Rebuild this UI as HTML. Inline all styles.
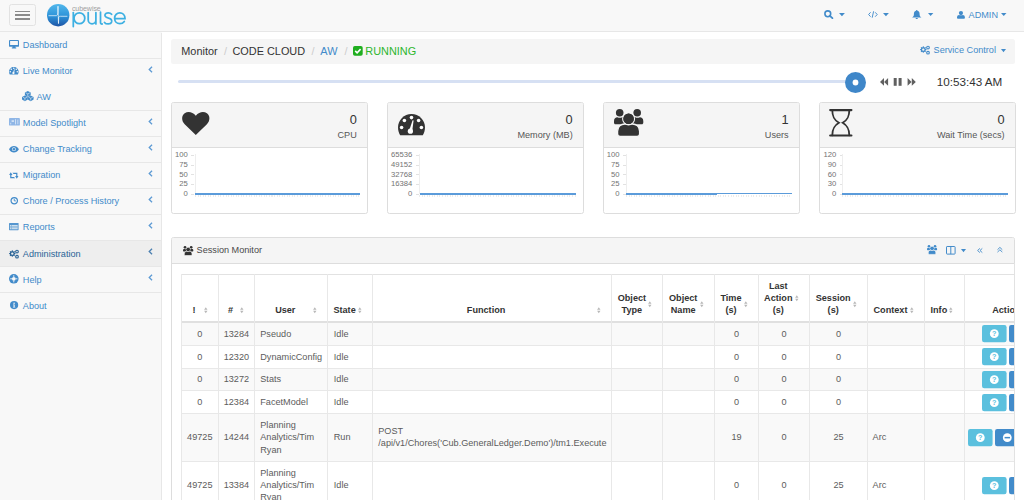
<!DOCTYPE html>
<html><head><meta charset="utf-8">
<style>
*{box-sizing:border-box;margin:0;padding:0}
html,body{width:1024px;height:500px;overflow:hidden;background:#f8f8f8;font-family:"Liberation Sans",sans-serif;color:#333}
.a{position:absolute}
svg{position:absolute;overflow:visible}
#hdr{position:absolute;left:0;top:0;width:1024px;height:32px;background:#f8f8f8;border-bottom:1px solid #e7e7e7}
#burger{position:absolute;left:8.6px;top:4.3px;width:27.8px;height:21.3px;border:1px solid #e2e2e2;border-radius:2.5px}
#burger i{position:absolute;left:5.6px;width:14.4px;height:1.5px;background:#8a8a8a}
#side{position:absolute;left:0;top:32.5px;width:162px;height:468px;border-right:1px solid #e7e7e7;background:#f8f8f8}
.ni{position:relative;height:26.07px;border-bottom:1px solid #e7e7e7;font-size:9.15px;color:#428bca}
.ni span.t{position:absolute;left:22.8px;top:7.5px;line-height:10px;white-space:nowrap}
.ni .chev{position:absolute;left:147.5px;top:6px;width:5px;height:7px}
.ni.act{background:#eee;color:#2a6496}
#main{position:absolute;left:162px;top:32px;width:862px;height:468px;background:#fff}
.hnav{color:#428bca;font-size:9.15px}
.crumb{position:absolute;left:171.2px;top:38.6px;width:843.8px;height:25.2px;background:#f5f5f5;border-radius:2.5px}
.crumb .t{position:absolute;top:6.5px;font-size:10.9px;line-height:12px;white-space:nowrap}
.sep{color:#ccc}
.panel{position:absolute;background:#fff;border:1px solid #ddd;border-radius:2.5px;overflow:hidden}
.ph{position:absolute;left:0;top:0;right:0;background:#f5f5f5;border-bottom:1px solid #ddd}
.big{position:absolute;right:10px;font-size:12.8px;line-height:14px;color:#333;text-align:right}
.lbl{position:absolute;right:10px;font-size:9.15px;line-height:10px;color:#333;text-align:right;white-space:nowrap}
.yl{position:absolute;font-size:7.4px;line-height:8px;color:#666;text-align:right;width:40px}
</style></head><body>
<!--HDR-->
<div id="hdr">
<div id="burger"><i style="top:5.3px"></i><i style="top:9.1px"></i><i style="top:13px"></i></div>
</div>
<svg style="left:46.6px;top:4px" width="22.4" height="22.4" viewBox="0 0 22.4 22.4"><defs><linearGradient id="lg" x1="0" y1="0" x2="0" y2="1"><stop offset="0" stop-color="#52b8ec"/><stop offset="0.55" stop-color="#2d92d8"/><stop offset="1" stop-color="#1e55a6"/></linearGradient></defs><circle cx="11.2" cy="11.2" r="11.2" fill="url(#lg)"/><path d="M1.5 11.7 H9.4 Q10.6 11.5 10.8 9 L11 2.2 L11.5 19.6 L11.7 13 Q11.9 12.3 13.4 12.3 H20.4" fill="none" stroke="#fff" stroke-width="0.8" opacity="0.85"/></svg>
<div class="a" style="left:71.9px;top:4.8px;font-size:7px;line-height:8px;color:#a0a0a0;letter-spacing:-0.05px">cubewise</div>
<svg style="left:0;top:0" width="1" height="1"><g fill="none" stroke="#3db0e2" stroke-width="1.75" stroke-linecap="round">
<path d="M73.3 12.6 V26.6"/><circle cx="79.4" cy="18.3" r="5.4"/>
<path d="M88.2 12.6 V19.9 A3.85 3.85 0 0 0 95.9 19.9 M95.9 12.6 V23.9"/>
<path d="M100.5 12.2 V22.2 Q100.5 24.1 102.2 24"/>
<path d="M111.6 14.2 C110.2 12.4 106.2 12.2 105.1 14.4 C104.2 16.6 106.6 17.6 108.6 18.2 C110.8 18.8 112.2 19.6 111.6 22 C110.8 24.6 106 24.4 104.5 22.4"/>
<path d="M114.7 18.6 H125 C125 15 122.6 12.9 119.8 12.9 C116.9 12.9 114.6 15.3 114.6 18.3 C114.6 21.4 116.9 23.7 119.8 23.7 C121.8 23.7 123.3 22.8 124.3 21.4"/>
</g></svg>
<svg style="left:824px;top:10.2px" width="9.1" height="8.6" viewBox="0 0 9.1 8.6"><circle cx="3.8" cy="3.8" r="2.9" fill="none" stroke="#428bca" stroke-width="1.6"/><path d="M5.9 5.9 L8.4 8.1" stroke="#428bca" stroke-width="1.9" stroke-linecap="round"/></svg>
<svg style="left:839.2px;top:12.9px" width="5.9" height="3.2" viewBox="0 0 5.9 3.2"><path d="M0 0 H5.9 L2.95 3.2 Z" fill="#428bca"/></svg>
<svg style="left:867.7px;top:11px" width="9.8" height="7" viewBox="0 0 9.8 7"><g fill="none" stroke="#428bca" stroke-width="0.95"><path d="M2.6 1.3 L0.6 3.5 L2.6 5.7 M7.2 1.3 L9.2 3.5 L7.2 5.7 M5.6 0.3 L4.2 6.7"/></g></svg>
<svg style="left:883.4px;top:12.9px" width="5.9" height="3.2" viewBox="0 0 5.9 3.2"><path d="M0 0 H5.9 L2.95 3.2 Z" fill="#428bca"/></svg>
<svg style="left:912.1px;top:9.9px" width="9.5" height="9.1" viewBox="0 0 9.5 9.1"><path d="M4.75 0 C5.3 0 5.5 0.4 5.5 0.8 C7.2 1.2 7.6 2.6 7.6 4.2 C7.6 6 8.3 6.8 9.5 7.6 H0 C1.2 6.8 1.9 6 1.9 4.2 C1.9 2.6 2.3 1.2 4 0.8 C4 0.4 4.2 0 4.75 0 Z M3.6 8 H5.9 C5.9 8.6 5.4 9.1 4.75 9.1 C4.1 9.1 3.6 8.6 3.6 8 Z" fill="#428bca"/></svg>
<svg style="left:927.6px;top:12.9px" width="5.3" height="3" viewBox="0 0 5.3 3"><path d="M0 0 H5.3 L2.65 3 Z" fill="#428bca"/></svg>
<svg style="left:956.9px;top:10.5px" width="7.9" height="7.8" viewBox="0 0 7.9 7.8"><circle cx="3.95" cy="2.1" r="2.1" fill="#428bca"/><path d="M0 6.6 C0 4.6 1 3.9 2 3.9 C2.6 4.3 5.3 4.3 5.9 3.9 C6.9 3.9 7.9 4.6 7.9 6.6 V7 C7.9 7.5 7.5 7.8 7 7.8 H0.9 C0.4 7.8 0 7.5 0 7 Z" fill="#428bca"/></svg>
<div class="a" style="left:968.6px;top:9.5px;font-size:9.15px;line-height:10px;color:#428bca;white-space:nowrap">ADMIN</div>
<svg style="left:1000.5px;top:12.9px" width="5.5" height="3" viewBox="0 0 5.5 3"><path d="M0 0 H5.5 L2.75 3 Z" fill="#428bca"/></svg>
<!--/HDR-->
<!--SIDE-->
<div id="side">
<div class="ni"><span class="t" style="left:22.8px">Dashboard</span></div>
<div class="ni" style="border-bottom-color:transparent"><span class="t" style="left:22.8px">Live Monitor</span><svg class="chev" style="left:148.1px;top:7.1px" width="3.7" height="5.1" viewBox="0 0 3.7 5.1"><path d="M3 0.5 L0.9 2.55 L3 4.6" fill="none" stroke="#5d9ad4" stroke-width="0.95"/></svg></div>
<div class="ni"><span class="t" style="left:36.5px">AW</span></div>
<div class="ni"><span class="t" style="left:22.8px">Model Spotlight</span><svg class="chev" style="left:148.1px;top:7.1px" width="3.7" height="5.1" viewBox="0 0 3.7 5.1"><path d="M3 0.5 L0.9 2.55 L3 4.6" fill="none" stroke="#5d9ad4" stroke-width="0.95"/></svg></div>
<div class="ni"><span class="t" style="left:22.8px">Change Tracking</span><svg class="chev" style="left:148.1px;top:7.1px" width="3.7" height="5.1" viewBox="0 0 3.7 5.1"><path d="M3 0.5 L0.9 2.55 L3 4.6" fill="none" stroke="#5d9ad4" stroke-width="0.95"/></svg></div>
<div class="ni"><span class="t" style="left:22.8px">Migration</span><svg class="chev" style="left:148.1px;top:7.1px" width="3.7" height="5.1" viewBox="0 0 3.7 5.1"><path d="M3 0.5 L0.9 2.55 L3 4.6" fill="none" stroke="#5d9ad4" stroke-width="0.95"/></svg></div>
<div class="ni"><span class="t" style="left:22.8px">Chore / Process History</span><svg class="chev" style="left:148.1px;top:7.1px" width="3.7" height="5.1" viewBox="0 0 3.7 5.1"><path d="M3 0.5 L0.9 2.55 L3 4.6" fill="none" stroke="#5d9ad4" stroke-width="0.95"/></svg></div>
<div class="ni"><span class="t" style="left:22.8px">Reports</span><svg class="chev" style="left:148.1px;top:7.1px" width="3.7" height="5.1" viewBox="0 0 3.7 5.1"><path d="M3 0.5 L0.9 2.55 L3 4.6" fill="none" stroke="#5d9ad4" stroke-width="0.95"/></svg></div>
<div class="ni act"><span class="t" style="left:22.8px">Administration</span><svg class="chev" style="left:148.1px;top:7.1px" width="3.7" height="5.1" viewBox="0 0 3.7 5.1"><path d="M3 0.5 L0.9 2.55 L3 4.6" fill="none" stroke="#4a7fb0" stroke-width="0.95"/></svg></div>
<div class="ni"><span class="t" style="left:22.8px">Help</span><svg class="chev" style="left:148.1px;top:7.1px" width="3.7" height="5.1" viewBox="0 0 3.7 5.1"><path d="M3 0.5 L0.9 2.55 L3 4.6" fill="none" stroke="#5d9ad4" stroke-width="0.95"/></svg></div>
<div class="ni"><span class="t" style="left:22.8px">About</span></div>
</div>
<svg style="left:9px;top:39.6px" width="10" height="8.4" viewBox="0 0 10 8.4"><path d="M0.9 0 H9.1 C9.6 0 10 0.4 10 0.9 V5.9 C10 6.4 9.6 6.8 9.1 6.8 H6.3 L6.6 7.6 H7.2 V8.4 H2.8 V7.6 H3.4 L3.7 6.8 H0.9 C0.4 6.8 0 6.4 0 5.9 V0.9 C0 0.4 0.4 0 0.9 0 Z M1.1 1.1 V4.9 H8.9 V1.1 Z" fill="#428bca" fill-rule="evenodd"/></svg>
<svg style="left:9.4px;top:66.8px" width="9.6" height="7.6" viewBox="0 0 27 21.3"><path d="M13.5 0 C6 0 0 6 0 13.5 C0 16.3 0.8 19 2.2 21.3 H24.8 C26.2 19 27 16.3 27 13.5 C27 6 21 0 13.5 0 Z" fill="#428bca"/><g fill="#f8f8f8"><circle cx="13.5" cy="3.6" r="2.2"/><circle cx="6.4" cy="6.5" r="2.2"/><circle cx="20.6" cy="6.5" r="2.2"/><circle cx="3.6" cy="13.5" r="2.2"/><circle cx="23.4" cy="13.5" r="2.2"/><circle cx="12.4" cy="17.2" r="3.2"/><path d="M10.8 16.6 L14.6 6.2 L16 6.6 L14.6 17.8 Z"/></g></svg>
<svg style="left:22.3px;top:90.6px" width="11.6" height="10.2" viewBox="0 0 11.6 10.2"><path d="M2.9 1.566 L5.8 0 L8.7 1.566 V4.234 L5.8 5.8 L2.9 4.234 Z" fill="#428bca"/><path d="M3.596 1.74 L5.8 2.9 L8.004 1.74 M5.8 2.9 V5.22" fill="none" stroke="#f8f8f8" stroke-width="0.55"/><path d="M0 5.966 L2.9 4.4 L5.8 5.966 V8.634 L2.9 10.2 L0 8.634 Z" fill="#428bca"/><path d="M0.696 6.140000000000001 L2.9 7.300000000000001 L5.104 6.140000000000001 M2.9 7.300000000000001 V9.620000000000001" fill="none" stroke="#f8f8f8" stroke-width="0.55"/><path d="M5.8 5.966 L8.7 4.4 L11.6 5.966 V8.634 L8.7 10.2 L5.8 8.634 Z" fill="#428bca"/><path d="M6.4959999999999996 6.140000000000001 L8.7 7.300000000000001 L10.904 6.140000000000001 M8.7 7.300000000000001 V9.620000000000001" fill="none" stroke="#f8f8f8" stroke-width="0.55"/></svg>
<svg style="left:9px;top:118.2px" width="10.9" height="7.6" viewBox="0 0 10.9 7.6"><rect x="0" y="0" width="10.9" height="7.6" rx="0.9" fill="#8fb6e6"/><g fill="#cfe0f4"><rect x="2.6" y="2.2" width="2.4" height="1.8"/><rect x="1.2" y="4.8" width="1" height="1.6"/><rect x="6" y="1.2" width="1" height="5.2"/><rect x="8.4" y="1.6" width="0.9" height="4.6"/></g></svg>
<svg style="left:9.3px;top:145.5px" width="9.9" height="6.4" viewBox="0 0 9.9 6.4"><path d="M0 3.2 C1.3 1 3 0 4.95 0 C6.9 0 8.6 1 9.9 3.2 C8.6 5.4 6.9 6.4 4.95 6.4 C3 6.4 1.3 5.4 0 3.2 Z" fill="#428bca"/><circle cx="4.95" cy="3.2" r="1.9" fill="#f8f8f8"/><circle cx="4.95" cy="3.2" r="1.3" fill="#428bca"/></svg>
<svg style="left:9.3px;top:171.6px" width="9.6" height="6.9" viewBox="0 0 9.6 6.9"><g fill="#428bca"><path d="M1.8 0.2 L0.1 2.9 H1.2 V6.2 H6.2 L5 5 H2.4 V2.9 H3.5 Z"/><path d="M7.8 6.7 L9.5 4 H8.4 V0.7 H3.4 L4.6 1.9 H7.2 V4 H6.1 Z"/></g></svg>
<svg style="left:9.9px;top:197.2px" width="8.5" height="7.5" viewBox="0 0 8.5 7.5"><circle cx="4.25" cy="3.75" r="3.2" fill="none" stroke="#428bca" stroke-width="1.2"/><path d="M4.25 1.8 V3.9 H5.9" fill="none" stroke="#428bca" stroke-width="0.9"/></svg>
<svg style="left:9.3px;top:222.8px" width="9.6" height="7.2" viewBox="0 0 9.6 7.2"><rect x="0" y="0" width="9.6" height="7.2" rx="0.6" fill="#428bca" opacity="0.9"/><g fill="#f8f8f8" opacity="0.75"><rect x="0.9" y="2" width="7.8" height="4.3"/></g><g fill="#428bca" opacity="0.6"><rect x="0.9" y="3" width="7.8" height="0.6"/><rect x="0.9" y="4.5" width="7.8" height="0.6"/><rect x="2.4" y="2" width="0.6" height="4.3"/></g></svg>
<svg style="left:9.3px;top:249.5px" width="10" height="9" viewBox="0 0 10 9"><path d="M2.72 1.17 L2.84 0.33 L3.76 0.33 L3.88 1.17 L4.61 1.47 L5.28 0.96 L5.94 1.62 L5.43 2.29 L5.73 3.02 L6.57 3.14 L6.57 4.06 L5.73 4.18 L5.43 4.91 L5.94 5.58 L5.28 6.24 L4.61 5.73 L3.88 6.03 L3.76 6.87 L2.84 6.87 L2.72 6.03 L1.99 5.73 L1.32 6.24 L0.66 5.58 L1.17 4.91 L0.87 4.18 L0.03 4.06 L0.03 3.14 L0.87 3.02 L1.17 2.29 L0.66 1.62 L1.32 0.96 L1.99 1.47 Z M4.50 3.60 A1.20 1.20 0 1 0 2.10 3.60 A1.20 1.20 0 1 0 4.50 3.60 Z" fill="#2a6496" fill-rule="evenodd"/><circle cx="8" cy="1.6" r="1.35" fill="none" stroke="#2a6496" stroke-width="1.1"/><circle cx="8" cy="6.7" r="1.35" fill="none" stroke="#2a6496" stroke-width="1.1"/></svg>
<svg style="left:9.4px;top:274.4px" width="9.6" height="9.6" viewBox="0 0 9.6 9.6"><circle cx="4.8" cy="4.8" r="4.8" fill="#428bca"/><circle cx="4.8" cy="4.8" r="1.9" fill="#f8f8f8"/><g stroke="#f8f8f8" stroke-width="1"><path d="M1.2 4.8 H3 M6.6 4.8 H8.4 M4.8 1.2 V3 M4.8 6.6 V8.4" opacity="0.9"/></g></svg>
<svg style="left:9.8px;top:301.4px" width="8.2" height="8.2" viewBox="0 0 8.2 8.2"><circle cx="4.1" cy="4.1" r="4.1" fill="#428bca"/><g fill="#f8f8f8"><circle cx="4.1" cy="2.2" r="0.8"/><path d="M3 3.4 H4.7 V5.9 H5.3 V6.6 H3 V5.9 H3.5 V4.1 H3 Z"/></g></svg>
<!--/SIDE-->
<div id="main"></div>
<!-- breadcrumb -->
<div class="crumb">
  <span class="t" style="left:10.1px">Monitor</span>
  <span class="t sep" style="left:52.8px">/</span>
  <span class="t" style="left:61.3px">CODE CLOUD</span>
  <span class="t sep" style="left:140.4px">/</span>
  <span class="t" style="left:149.1px;color:#428bca">AW</span>
  <span class="t sep" style="left:173.2px">/</span>
  <svg style="left:181.6px;top:7.6px" width="10" height="10" viewBox="0 0 10 10"><rect x="0" y="0" width="9.7" height="9.7" rx="1.8" fill="#1fae1f"/><path d="M2.2 4.9 L4.1 6.8 L7.6 3.1" stroke="#fff" stroke-width="1.6" fill="none"/></svg>
  <span class="t" style="left:194.1px;color:#2db52d">RUNNING</span>
  <svg style="left:748.8px;top:7.5px" width="10" height="9" viewBox="0 0 10 9"><path d="M2.72 1.17 L2.84 0.33 L3.76 0.33 L3.88 1.17 L4.61 1.47 L5.28 0.96 L5.94 1.62 L5.43 2.29 L5.73 3.02 L6.57 3.14 L6.57 4.06 L5.73 4.18 L5.43 4.91 L5.94 5.58 L5.28 6.24 L4.61 5.73 L3.88 6.03 L3.76 6.87 L2.84 6.87 L2.72 6.03 L1.99 5.73 L1.32 6.24 L0.66 5.58 L1.17 4.91 L0.87 4.18 L0.03 4.06 L0.03 3.14 L0.87 3.02 L1.17 2.29 L0.66 1.62 L1.32 0.96 L1.99 1.47 Z M4.50 3.60 A1.20 1.20 0 1 0 2.10 3.60 A1.20 1.20 0 1 0 4.50 3.60 Z" fill="#428bca" fill-rule="evenodd"/><circle cx="8" cy="1.6" r="1.35" fill="none" stroke="#428bca" stroke-width="1.1"/><circle cx="8" cy="6.7" r="1.35" fill="none" stroke="#428bca" stroke-width="1.1"/></svg>
  <span class="t hnav" style="left:762.4px;top:5.5px;font-size:9.15px">Service Control</span>
  <svg style="left:829.6px;top:10.2px" width="5" height="4" viewBox="0 0 5 4"><path d="M0 0 H5 L2.5 3.3 Z" fill="#428bca"/></svg>
</div>
<!-- slider -->
<div class="a" style="left:177.8px;top:80.1px;width:670px;height:2.9px;background:#d6e0f3;border-radius:1.5px"></div>
<svg style="left:844.8px;top:71.7px" width="21" height="21" viewBox="0 0 21 21"><circle cx="10.5" cy="10.5" r="10.5" fill="#3f87c9"/><circle cx="10.5" cy="10.5" r="2.9" fill="#fff"/></svg>
<svg style="left:880px;top:77.6px" width="37" height="8" viewBox="0 0 37 8"><g fill="#606060"><path d="M4 0 L0 3.9 L4 7.8 Z M8.1 0 L4.1 3.9 L8.1 7.8 Z"/><rect x="13.7" y="0" width="3" height="7.8"/><rect x="18.6" y="0" width="3" height="7.8"/><path d="M27.6 0 L31.6 3.9 L27.6 7.8 Z M31.8 0 L35.8 3.9 L31.8 7.8 Z"/></g></svg>
<div class="a" style="left:936.7px;top:75.2px;font-size:11.7px;line-height:13px;color:#333;white-space:nowrap">10:53:43 AM</div>

<!--PANELS-->
<div class="panel" style="left:171.1px;top:102.4px;width:196.7px;height:111.6px"><div class="ph" style="height:44.6px"></div></div>
<svg style="left:181.6px;top:111.7px" width="27.6" height="23.4" viewBox="0 0 28 24"><path d="M14 23.6 L2.6 12.6 C-0.9 9.2 -0.8 3.7 2.6 1.4 C5.8 -0.9 10.6 -0.2 14 3.9 C17.4 -0.2 22.2 -0.9 25.4 1.4 C28.8 3.7 28.9 9.2 25.4 12.6 Z" fill="#333"/></svg>
<div class="a" style="left:256.8px;width:100px;top:111.8px;font-size:12.8px;line-height:15px;text-align:right;color:#333">0</div>
<div class="a" style="left:236.8px;width:120px;top:129.9px;font-size:9.15px;line-height:10px;text-align:right;color:#555;white-space:nowrap">CPU</div>
<div class="a" style="left:147.9px;width:40px;top:151.1px;font-size:7.7px;line-height:8px;text-align:right;color:#737373">100</div>
<div class="a" style="left:191.2px;width:3px;top:154.9px;height:0.8px;background:#e2e2e2"></div>
<div class="a" style="left:147.9px;width:40px;top:160.8px;font-size:7.7px;line-height:8px;text-align:right;color:#737373">75</div>
<div class="a" style="left:191.2px;width:3px;top:164.6px;height:0.8px;background:#e2e2e2"></div>
<div class="a" style="left:147.9px;width:40px;top:170.5px;font-size:7.7px;line-height:8px;text-align:right;color:#737373">50</div>
<div class="a" style="left:191.2px;width:3px;top:174.3px;height:0.8px;background:#e2e2e2"></div>
<div class="a" style="left:147.9px;width:40px;top:180.2px;font-size:7.7px;line-height:8px;text-align:right;color:#737373">25</div>
<div class="a" style="left:191.2px;width:3px;top:184.0px;height:0.8px;background:#e2e2e2"></div>
<div class="a" style="left:147.9px;width:40px;top:189.9px;font-size:7.7px;line-height:8px;text-align:right;color:#737373">0</div>
<div class="a" style="left:191.2px;width:3px;top:193.7px;height:0.8px;background:#e2e2e2"></div>
<div class="a" style="left:194.6px;width:0.8px;top:153.8px;height:40.5px;background:#eee"></div>
<div class="a" style="left:194.5px;width:165.2px;top:195.2px;height:2.2px;background:repeating-linear-gradient(90deg,#ececec 0 1px,transparent 1px 2.55px)"></div>
<div class="a" style="left:195.0px;width:164.7px;top:193.1px;height:1.7px;background:#5b9bda"></div>
<div class="panel" style="left:387.0px;top:102.4px;width:196.7px;height:111.6px"><div class="ph" style="height:44.6px"></div></div>
<svg style="left:397.7px;top:113.8px" width="27" height="21.3" viewBox="0 0 27 21.3"><path d="M13.5 0 C6 0 0 6 0 13.5 C0 16.3 0.8 19 2.2 21.3 H24.8 C26.2 19 27 16.3 27 13.5 C27 6 21 0 13.5 0 Z" fill="#333"/><g fill="#fff"><circle cx="13.5" cy="3.6" r="1.8"/><circle cx="6.4" cy="6.5" r="1.8"/><circle cx="20.6" cy="6.5" r="1.8"/><circle cx="3.6" cy="13.5" r="1.8"/><circle cx="23.4" cy="13.5" r="1.8"/><circle cx="12.4" cy="17.2" r="2.6"/><path d="M11.2 16.6 L14.6 6.2 L15.6 6.5 L14.2 17.6 Z"/></g></svg>
<div class="a" style="left:472.7px;width:100px;top:111.8px;font-size:12.8px;line-height:15px;text-align:right;color:#333">0</div>
<div class="a" style="left:452.7px;width:120px;top:129.9px;font-size:9.15px;line-height:10px;text-align:right;color:#555;white-space:nowrap">Memory (MB)</div>
<div class="a" style="left:372.3px;width:40px;top:151.1px;font-size:7.7px;line-height:8px;text-align:right;color:#737373">65536</div>
<div class="a" style="left:415.6px;width:3px;top:154.9px;height:0.8px;background:#e2e2e2"></div>
<div class="a" style="left:372.3px;width:40px;top:160.8px;font-size:7.7px;line-height:8px;text-align:right;color:#737373">49152</div>
<div class="a" style="left:415.6px;width:3px;top:164.6px;height:0.8px;background:#e2e2e2"></div>
<div class="a" style="left:372.3px;width:40px;top:170.5px;font-size:7.7px;line-height:8px;text-align:right;color:#737373">32768</div>
<div class="a" style="left:415.6px;width:3px;top:174.3px;height:0.8px;background:#e2e2e2"></div>
<div class="a" style="left:372.3px;width:40px;top:180.2px;font-size:7.7px;line-height:8px;text-align:right;color:#737373">16384</div>
<div class="a" style="left:415.6px;width:3px;top:184.0px;height:0.8px;background:#e2e2e2"></div>
<div class="a" style="left:372.3px;width:40px;top:189.9px;font-size:7.7px;line-height:8px;text-align:right;color:#737373">0</div>
<div class="a" style="left:415.6px;width:3px;top:193.7px;height:0.8px;background:#e2e2e2"></div>
<div class="a" style="left:419.1px;width:0.8px;top:153.8px;height:40.5px;background:#eee"></div>
<div class="a" style="left:419.0px;width:156.5px;top:195.2px;height:2.2px;background:repeating-linear-gradient(90deg,#ececec 0 1px,transparent 1px 2.55px)"></div>
<div class="a" style="left:419.5px;width:156.0px;top:193.1px;height:1.7px;background:#5b9bda"></div>
<div class="panel" style="left:603.0px;top:102.4px;width:196.7px;height:111.6px"><div class="ph" style="height:44.6px"></div></div>
<svg style="left:613.5px;top:109.3px" width="29.4" height="27.3" viewBox="0 0 29.4 27.3"><g fill="#333"><circle cx="5.7" cy="3.8" r="3.8"/><circle cx="23.2" cy="3.8" r="3.8"/><path d="M0 12 C0 9.4 1.6 8.2 3.4 8.2 C4.8 9 6.8 9 8.2 8.2 C10 8.2 11.5 9.4 11.5 12 V13.8 C11.5 14.7 10.9 15.3 10 15.3 H1.5 C0.6 15.3 0 14.7 0 13.8 Z"/><path d="M17.7 12 C17.7 9.4 19.3 8.2 21.1 8.2 C22.5 9 24.5 9 25.9 8.2 C27.7 8.2 29.3 9.4 29.3 12 V13.8 C29.3 14.7 28.7 15.3 27.8 15.3 H19.2 C18.3 15.3 17.7 14.7 17.7 13.8 Z"/></g><g fill="#333" stroke="#f5f5f5" stroke-width="1.3"><circle cx="14.6" cy="9.8" r="5.9"/><path d="M3.6 22.3 C3.6 17.6 7 15 10.8 15 C12.6 16 16.6 16 18.4 15 C22.2 15 25.6 17.6 25.6 22.3 V24.9 C25.6 26.3 24.5 27.3 23.1 27.3 H6.1 C4.7 27.3 3.6 26.3 3.6 24.9 Z"/></g><circle cx="14.6" cy="9.8" r="5.25" fill="#333"/></svg>
<div class="a" style="left:688.7px;width:100px;top:111.8px;font-size:12.8px;line-height:15px;text-align:right;color:#333">1</div>
<div class="a" style="left:668.7px;width:120px;top:129.9px;font-size:9.15px;line-height:10px;text-align:right;color:#555;white-space:nowrap">Users</div>
<div class="a" style="left:579.5px;width:40px;top:151.1px;font-size:7.7px;line-height:8px;text-align:right;color:#737373">100</div>
<div class="a" style="left:622.8px;width:3px;top:154.9px;height:0.8px;background:#e2e2e2"></div>
<div class="a" style="left:579.5px;width:40px;top:160.8px;font-size:7.7px;line-height:8px;text-align:right;color:#737373">75</div>
<div class="a" style="left:622.8px;width:3px;top:164.6px;height:0.8px;background:#e2e2e2"></div>
<div class="a" style="left:579.5px;width:40px;top:170.5px;font-size:7.7px;line-height:8px;text-align:right;color:#737373">50</div>
<div class="a" style="left:622.8px;width:3px;top:174.3px;height:0.8px;background:#e2e2e2"></div>
<div class="a" style="left:579.5px;width:40px;top:180.2px;font-size:7.7px;line-height:8px;text-align:right;color:#737373">25</div>
<div class="a" style="left:622.8px;width:3px;top:184.0px;height:0.8px;background:#e2e2e2"></div>
<div class="a" style="left:579.5px;width:40px;top:189.9px;font-size:7.7px;line-height:8px;text-align:right;color:#737373">0</div>
<div class="a" style="left:622.8px;width:3px;top:193.7px;height:0.8px;background:#e2e2e2"></div>
<div class="a" style="left:625.6px;width:0.8px;top:153.8px;height:40.5px;background:#eee"></div>
<div class="a" style="left:625.5px;width:166.1px;top:195.2px;height:2.2px;background:repeating-linear-gradient(90deg,#ececec 0 1px,transparent 1px 2.55px)"></div>
<div class="a" style="left:626.0px;width:91.0px;top:193.1px;height:1.7px;background:#5b9bda"></div>
<div class="a" style="left:717px;width:74.6px;top:192.6px;height:1.7px;background:#5b9bda"></div>
<div class="panel" style="left:818.9px;top:102.4px;width:196.7px;height:111.6px"><div class="ph" style="height:44.6px"></div></div>
<svg style="left:829.1px;top:109.3px" width="24" height="27.3" viewBox="0 0 24 27.3"><g fill="none" stroke="#333" stroke-linecap="round"><path d="M1.2 1.1 H22.4 M1.2 26.5 H22.4" stroke-width="2.2"/><path d="M3.3 1.3 C3.3 7.2 4.6 10.6 9.9 13.8 C4.6 17 3.3 20.4 3.3 26.3 M20.3 1.3 C20.3 7.2 19 10.6 13.7 13.8 C19 17 20.3 20.4 20.3 26.3" stroke-width="1.85"/></g></svg>
<div class="a" style="left:904.6px;width:100px;top:111.8px;font-size:12.8px;line-height:15px;text-align:right;color:#333">0</div>
<div class="a" style="left:884.6px;width:120px;top:129.9px;font-size:9.15px;line-height:10px;text-align:right;color:#555;white-space:nowrap">Wait Time (secs)</div>
<div class="a" style="left:796.4px;width:40px;top:151.1px;font-size:7.7px;line-height:8px;text-align:right;color:#737373">120</div>
<div class="a" style="left:839.7px;width:3px;top:154.9px;height:0.8px;background:#e2e2e2"></div>
<div class="a" style="left:796.4px;width:40px;top:160.8px;font-size:7.7px;line-height:8px;text-align:right;color:#737373">90</div>
<div class="a" style="left:839.7px;width:3px;top:164.6px;height:0.8px;background:#e2e2e2"></div>
<div class="a" style="left:796.4px;width:40px;top:170.5px;font-size:7.7px;line-height:8px;text-align:right;color:#737373">60</div>
<div class="a" style="left:839.7px;width:3px;top:174.3px;height:0.8px;background:#e2e2e2"></div>
<div class="a" style="left:796.4px;width:40px;top:180.2px;font-size:7.7px;line-height:8px;text-align:right;color:#737373">30</div>
<div class="a" style="left:839.7px;width:3px;top:184.0px;height:0.8px;background:#e2e2e2"></div>
<div class="a" style="left:796.4px;width:40px;top:189.9px;font-size:7.7px;line-height:8px;text-align:right;color:#737373">0</div>
<div class="a" style="left:839.7px;width:3px;top:193.7px;height:0.8px;background:#e2e2e2"></div>
<div class="a" style="left:841.6px;width:0.8px;top:153.8px;height:40.5px;background:#eee"></div>
<div class="a" style="left:841.5px;width:166.3px;top:195.2px;height:2.2px;background:repeating-linear-gradient(90deg,#ececec 0 1px,transparent 1px 2.55px)"></div>
<div class="a" style="left:842.0px;width:165.8px;top:193.1px;height:1.7px;background:#5b9bda"></div>
<!--/PANELS-->
<!--TABLE-->
<div class="panel" style="left:171.1px;top:237.2px;width:844.3px;height:300px;border-radius:2.5px"><div class="ph" style="height:25.9px"></div></div>
<svg style="left:182.6px;top:245.6px" width="10.4" height="9.6" viewBox="0 0 29.4 27.3"><g fill="#333"><circle cx="5.7" cy="3.8" r="3.8"/><circle cx="23.2" cy="3.8" r="3.8"/><path d="M0 12 C0 9.4 1.6 8.2 3.4 8.2 C4.8 9 6.8 9 8.2 8.2 C10 8.2 11.5 9.4 11.5 12 V13.8 C11.5 14.7 10.9 15.3 10 15.3 H1.5 C0.6 15.3 0 14.7 0 13.8 Z"/><path d="M17.7 12 C17.7 9.4 19.3 8.2 21.1 8.2 C22.5 9 24.5 9 25.9 8.2 C27.7 8.2 29.3 9.4 29.3 12 V13.8 C29.3 14.7 28.7 15.3 27.8 15.3 H19.2 C18.3 15.3 17.7 14.7 17.7 13.8 Z"/></g><g fill="#333" stroke="#f5f5f5" stroke-width="2"><circle cx="14.6" cy="9.8" r="5.9"/><path d="M3.6 22.3 C3.6 17.6 7 15 10.8 15 C12.6 16 16.6 16 18.4 15 C22.2 15 25.6 17.6 25.6 22.3 V24.9 C25.6 26.3 24.5 27.3 23.1 27.3 H6.1 C4.7 27.3 3.6 26.3 3.6 24.9 Z"/></g><circle cx="14.6" cy="9.8" r="4.9" fill="#333"/></svg>
<div class="a" style="left:196.6px;top:245.1px;font-size:9.15px;line-height:10px;color:#4a4a4a;white-space:nowrap">Session Monitor</div>
<svg style="left:927.1px;top:245.4px" width="10.2" height="9.4" viewBox="0 0 29.4 27.3"><g fill="#428bca"><circle cx="5.7" cy="3.8" r="3.8"/><circle cx="23.2" cy="3.8" r="3.8"/><path d="M0 12 C0 9.4 1.6 8.2 3.4 8.2 C4.8 9 6.8 9 8.2 8.2 C10 8.2 11.5 9.4 11.5 12 V13.8 C11.5 14.7 10.9 15.3 10 15.3 H1.5 C0.6 15.3 0 14.7 0 13.8 Z"/><path d="M17.7 12 C17.7 9.4 19.3 8.2 21.1 8.2 C22.5 9 24.5 9 25.9 8.2 C27.7 8.2 29.3 9.4 29.3 12 V13.8 C29.3 14.7 28.7 15.3 27.8 15.3 H19.2 C18.3 15.3 17.7 14.7 17.7 13.8 Z"/></g><g fill="#428bca" stroke="#f5f5f5" stroke-width="2"><circle cx="14.6" cy="9.8" r="5.9"/><path d="M3.6 22.3 C3.6 17.6 7 15 10.8 15 C12.6 16 16.6 16 18.4 15 C22.2 15 25.6 17.6 25.6 22.3 V24.9 C25.6 26.3 24.5 27.3 23.1 27.3 H6.1 C4.7 27.3 3.6 26.3 3.6 24.9 Z"/></g><circle cx="14.6" cy="9.8" r="4.9" fill="#428bca"/></svg>
<svg style="left:945.9px;top:245.8px" width="9.6" height="8.6" viewBox="0 0 9.6 8.6"><g fill="none" stroke="#428bca" stroke-width="1.0"><rect x="0.5" y="0.5" width="8.6" height="7.6" rx="0.6"/><path d="M4.8 0.5 V8.1"/></g></svg>
<svg style="left:961.4px;top:248.8px" width="5" height="3.4" viewBox="0 0 5 3.4"><path d="M0 0 H5 L2.5 3.2 Z" fill="#428bca"/></svg>
<svg style="left:977.1px;top:247.6px" width="5.8" height="5" viewBox="0 0 5.8 5"><path d="M2.9 0.4 L0.6 2.5 L2.9 4.6 M5.3 0.4 L3 2.5 L5.3 4.6" fill="none" stroke="#428bca" stroke-width="0.9"/></svg>
<svg style="left:996.5px;top:247.2px" width="5.8" height="5.4" viewBox="0 0 5.8 5.4"><path d="M0.5 2.7 L2.9 0.4 L5.3 2.7 M0.5 5.1 L2.9 2.8 L5.3 5.1" fill="none" stroke="#428bca" stroke-width="0.9"/></svg>
<div class="a" style="left:172.6px;top:264px;width:842.0px;height:236px;overflow:hidden">
<div class="a" style="left:8.9px;top:58.4px;width:896.5px;height:23.0px;background:#f9f9f9"></div>
<div class="a" style="left:8.9px;top:104.0px;width:896.5px;height:22.7px;background:#f9f9f9"></div>
<div class="a" style="left:8.9px;top:149.4px;width:896.5px;height:47.8px;background:#f9f9f9"></div>
<div class="a" style="left:8.9px;top:9.8px;width:896.5px;height:1px;background:#e2e2e2"></div>
<div class="a" style="left:8.9px;top:57.1px;width:896.5px;height:1.6px;background:#e0e0e0"></div>
<div class="a" style="left:8.9px;top:80.9px;width:896.5px;height:1px;background:#e8e8e8"></div>
<div class="a" style="left:8.9px;top:103.5px;width:896.5px;height:1px;background:#e8e8e8"></div>
<div class="a" style="left:8.9px;top:126.2px;width:896.5px;height:1px;background:#e8e8e8"></div>
<div class="a" style="left:8.9px;top:148.9px;width:896.5px;height:1px;background:#e8e8e8"></div>
<div class="a" style="left:8.9px;top:196.7px;width:896.5px;height:1px;background:#e8e8e8"></div>
<div class="a" style="left:8.9px;top:244.3px;width:896.5px;height:1px;background:#e8e8e8"></div>
<div class="a" style="left:8.4px;top:9.8px;width:1px;height:260px;background:#e8e8e8"></div>
<div class="a" style="left:45.1px;top:9.8px;width:1px;height:260px;background:#e8e8e8"></div>
<div class="a" style="left:81.4px;top:9.8px;width:1px;height:260px;background:#e8e8e8"></div>
<div class="a" style="left:154.5px;top:9.8px;width:1px;height:260px;background:#e8e8e8"></div>
<div class="a" style="left:199.2px;top:9.8px;width:1px;height:260px;background:#e8e8e8"></div>
<div class="a" style="left:438.4px;top:9.8px;width:1px;height:260px;background:#e8e8e8"></div>
<div class="a" style="left:489.6px;top:9.8px;width:1px;height:260px;background:#e8e8e8"></div>
<div class="a" style="left:541.3px;top:9.8px;width:1px;height:260px;background:#e8e8e8"></div>
<div class="a" style="left:585.4px;top:9.8px;width:1px;height:260px;background:#e8e8e8"></div>
<div class="a" style="left:636.3px;top:9.8px;width:1px;height:260px;background:#e8e8e8"></div>
<div class="a" style="left:694.6px;top:9.8px;width:1px;height:260px;background:#e8e8e8"></div>
<div class="a" style="left:751.6px;top:9.8px;width:1px;height:260px;background:#e8e8e8"></div>
<div class="a" style="left:791.0px;top:9.8px;width:1px;height:260px;background:#e8e8e8"></div>
<div class="a" style="left:904.9px;top:9.8px;width:1px;height:260px;background:#e8e8e8"></div>
<div class="a" style="left:-18.5px;width:80px;top:40.3px;font-size:9.15px;line-height:12px;font-weight:bold;text-align:center;color:#333;white-space:nowrap">!</div>
<svg style="left:31.0px;top:43.2px" width="3.6" height="6.4" viewBox="0 0 3.6 6.4"><path d="M0.1 2.7 L1.8 0.2 L3.5 2.7 Z M0.1 3.7 L1.8 6.2 L3.5 3.7 Z" fill="#b8b8b8"/></svg>
<div class="a" style="left:18.0px;width:80px;top:40.3px;font-size:9.15px;line-height:12px;font-weight:bold;text-align:center;color:#333;white-space:nowrap">#</div>
<svg style="left:67.3px;top:43.2px" width="3.6" height="6.4" viewBox="0 0 3.6 6.4"><path d="M0.1 2.7 L1.8 0.2 L3.5 2.7 Z M0.1 3.7 L1.8 6.2 L3.5 3.7 Z" fill="#b8b8b8"/></svg>
<div class="a" style="left:72.7px;width:80px;top:40.3px;font-size:9.15px;line-height:12px;font-weight:bold;text-align:center;color:#333;white-space:nowrap">User</div>
<svg style="left:140.4px;top:43.2px" width="3.6" height="6.4" viewBox="0 0 3.6 6.4"><path d="M0.1 2.7 L1.8 0.2 L3.5 2.7 Z M0.1 3.7 L1.8 6.2 L3.5 3.7 Z" fill="#b8b8b8"/></svg>
<div class="a" style="left:132.0px;width:80px;top:40.3px;font-size:9.15px;line-height:12px;font-weight:bold;text-align:center;color:#333;white-space:nowrap">State</div>
<svg style="left:185.1px;top:43.2px" width="3.6" height="6.4" viewBox="0 0 3.6 6.4"><path d="M0.1 2.7 L1.8 0.2 L3.5 2.7 Z M0.1 3.7 L1.8 6.2 L3.5 3.7 Z" fill="#b8b8b8"/></svg>
<div class="a" style="left:273.5px;width:80px;top:40.3px;font-size:9.15px;line-height:12px;font-weight:bold;text-align:center;color:#333;white-space:nowrap">Function</div>
<svg style="left:424.3px;top:43.2px" width="3.6" height="6.4" viewBox="0 0 3.6 6.4"><path d="M0.1 2.7 L1.8 0.2 L3.5 2.7 Z M0.1 3.7 L1.8 6.2 L3.5 3.7 Z" fill="#b8b8b8"/></svg>
<div class="a" style="left:419.3px;width:80px;top:27.9px;font-size:9.15px;line-height:12px;font-weight:bold;text-align:center;color:#333;white-space:nowrap">Object</div>
<div class="a" style="left:419.3px;width:80px;top:40.3px;font-size:9.15px;line-height:12px;font-weight:bold;text-align:center;color:#333;white-space:nowrap">Type</div>
<svg style="left:475.5px;top:37.2px" width="3.6" height="6.4" viewBox="0 0 3.6 6.4"><path d="M0.1 2.7 L1.8 0.2 L3.5 2.7 Z M0.1 3.7 L1.8 6.2 L3.5 3.7 Z" fill="#b8b8b8"/></svg>
<div class="a" style="left:470.6px;width:80px;top:27.9px;font-size:9.15px;line-height:12px;font-weight:bold;text-align:center;color:#333;white-space:nowrap">Object</div>
<div class="a" style="left:470.6px;width:80px;top:40.3px;font-size:9.15px;line-height:12px;font-weight:bold;text-align:center;color:#333;white-space:nowrap">Name</div>
<svg style="left:527.2px;top:37.2px" width="3.6" height="6.4" viewBox="0 0 3.6 6.4"><path d="M0.1 2.7 L1.8 0.2 L3.5 2.7 Z M0.1 3.7 L1.8 6.2 L3.5 3.7 Z" fill="#b8b8b8"/></svg>
<div class="a" style="left:518.4px;width:80px;top:27.9px;font-size:9.15px;line-height:12px;font-weight:bold;text-align:center;color:#333;white-space:nowrap">Time</div>
<div class="a" style="left:518.4px;width:80px;top:40.3px;font-size:9.15px;line-height:12px;font-weight:bold;text-align:center;color:#333;white-space:nowrap">(s)</div>
<svg style="left:571.3px;top:37.2px" width="3.6" height="6.4" viewBox="0 0 3.6 6.4"><path d="M0.1 2.7 L1.8 0.2 L3.5 2.7 Z M0.1 3.7 L1.8 6.2 L3.5 3.7 Z" fill="#b8b8b8"/></svg>
<div class="a" style="left:565.7px;width:80px;top:15.5px;font-size:9.15px;line-height:12px;font-weight:bold;text-align:center;color:#333;white-space:nowrap">Last</div>
<div class="a" style="left:565.7px;width:80px;top:27.9px;font-size:9.15px;line-height:12px;font-weight:bold;text-align:center;color:#333;white-space:nowrap">Action</div>
<div class="a" style="left:565.7px;width:80px;top:40.3px;font-size:9.15px;line-height:12px;font-weight:bold;text-align:center;color:#333;white-space:nowrap">(s)</div>
<svg style="left:622.2px;top:31.0px" width="3.6" height="6.4" viewBox="0 0 3.6 6.4"><path d="M0.1 2.7 L1.8 0.2 L3.5 2.7 Z M0.1 3.7 L1.8 6.2 L3.5 3.7 Z" fill="#b8b8b8"/></svg>
<div class="a" style="left:620.6px;width:80px;top:27.9px;font-size:9.15px;line-height:12px;font-weight:bold;text-align:center;color:#333;white-space:nowrap">Session</div>
<div class="a" style="left:620.6px;width:80px;top:40.3px;font-size:9.15px;line-height:12px;font-weight:bold;text-align:center;color:#333;white-space:nowrap">(s)</div>
<svg style="left:680.5px;top:37.2px" width="3.6" height="6.4" viewBox="0 0 3.6 6.4"><path d="M0.1 2.7 L1.8 0.2 L3.5 2.7 Z M0.1 3.7 L1.8 6.2 L3.5 3.7 Z" fill="#b8b8b8"/></svg>
<div class="a" style="left:677.9px;width:80px;top:40.3px;font-size:9.15px;line-height:12px;font-weight:bold;text-align:center;color:#333;white-space:nowrap">Context</div>
<svg style="left:737.5px;top:43.2px" width="3.6" height="6.4" viewBox="0 0 3.6 6.4"><path d="M0.1 2.7 L1.8 0.2 L3.5 2.7 Z M0.1 3.7 L1.8 6.2 L3.5 3.7 Z" fill="#b8b8b8"/></svg>
<div class="a" style="left:726.3px;width:80px;top:40.3px;font-size:9.15px;line-height:12px;font-weight:bold;text-align:center;color:#333;white-space:nowrap">Info</div>
<svg style="left:776.9px;top:43.2px" width="3.6" height="6.4" viewBox="0 0 3.6 6.4"><path d="M0.1 2.7 L1.8 0.2 L3.5 2.7 Z M0.1 3.7 L1.8 6.2 L3.5 3.7 Z" fill="#b8b8b8"/></svg>
<div class="a" style="left:819.6px;top:40.3px;font-size:9.15px;line-height:12px;font-weight:bold;color:#333;white-space:nowrap">Actions</div>
<div class="a" style="left:-32.8px;width:120px;top:63.8px;font-size:9.15px;line-height:12.4px;text-align:center;color:#5c5c5c;white-space:nowrap">0</div>
<div class="a" style="left:3.8px;width:120px;top:63.8px;font-size:9.15px;line-height:12.4px;text-align:center;color:#5c5c5c;white-space:nowrap">13284</div>
<div class="a" style="left:87.7px;top:63.8px;font-size:9.15px;line-height:12.4px;color:#5c5c5c;white-space:nowrap">Pseudo</div>
<div class="a" style="left:161.2px;top:63.8px;font-size:9.15px;line-height:12.4px;color:#5c5c5c;white-space:nowrap">Idle</div>
<div class="a" style="left:503.9px;width:120px;top:63.8px;font-size:9.15px;line-height:12.4px;text-align:center;color:#5c5c5c;white-space:nowrap">0</div>
<div class="a" style="left:551.4px;width:120px;top:63.8px;font-size:9.15px;line-height:12.4px;text-align:center;color:#5c5c5c;white-space:nowrap">0</div>
<div class="a" style="left:605.9px;width:120px;top:63.8px;font-size:9.15px;line-height:12.4px;text-align:center;color:#5c5c5c;white-space:nowrap">0</div>
<svg style="left:809.5px;top:61.4px" width="24.6" height="17.3" viewBox="0 0 24.6 17.3"><rect width="24.6" height="17.3" rx="2.2" fill="#5bc0de"/><circle cx="12.3" cy="8.65" r="4.4" fill="#fff"/><text x="12.3" y="11.3" font-size="7.2" font-weight="bold" text-anchor="middle" fill="#5bc0de" font-family="Liberation Sans">?</text></svg>
<svg style="left:836.7px;top:61.4px" width="24.6" height="17.3" viewBox="0 0 24.6 17.3"><rect width="24.6" height="17.3" rx="2.2" fill="#428bca"/><circle cx="12.3" cy="8.65" r="4.4" fill="#fff"/><rect x="9.6" y="7.9" width="5.4" height="1.5" fill="#428bca"/></svg>
<div class="a" style="left:-32.8px;width:120px;top:86.6px;font-size:9.15px;line-height:12.4px;text-align:center;color:#5c5c5c;white-space:nowrap">0</div>
<div class="a" style="left:3.8px;width:120px;top:86.6px;font-size:9.15px;line-height:12.4px;text-align:center;color:#5c5c5c;white-space:nowrap">12320</div>
<div class="a" style="left:87.7px;top:86.6px;font-size:9.15px;line-height:12.4px;color:#5c5c5c;white-space:nowrap">DynamicConfig</div>
<div class="a" style="left:161.2px;top:86.6px;font-size:9.15px;line-height:12.4px;color:#5c5c5c;white-space:nowrap">Idle</div>
<div class="a" style="left:503.9px;width:120px;top:86.6px;font-size:9.15px;line-height:12.4px;text-align:center;color:#5c5c5c;white-space:nowrap">0</div>
<div class="a" style="left:551.4px;width:120px;top:86.6px;font-size:9.15px;line-height:12.4px;text-align:center;color:#5c5c5c;white-space:nowrap">0</div>
<div class="a" style="left:605.9px;width:120px;top:86.6px;font-size:9.15px;line-height:12.4px;text-align:center;color:#5c5c5c;white-space:nowrap">0</div>
<svg style="left:809.5px;top:84.2px" width="24.6" height="17.3" viewBox="0 0 24.6 17.3"><rect width="24.6" height="17.3" rx="2.2" fill="#5bc0de"/><circle cx="12.3" cy="8.65" r="4.4" fill="#fff"/><text x="12.3" y="11.3" font-size="7.2" font-weight="bold" text-anchor="middle" fill="#5bc0de" font-family="Liberation Sans">?</text></svg>
<svg style="left:836.7px;top:84.2px" width="24.6" height="17.3" viewBox="0 0 24.6 17.3"><rect width="24.6" height="17.3" rx="2.2" fill="#428bca"/><circle cx="12.3" cy="8.65" r="4.4" fill="#fff"/><rect x="9.6" y="7.9" width="5.4" height="1.5" fill="#428bca"/></svg>
<div class="a" style="left:-32.8px;width:120px;top:109.3px;font-size:9.15px;line-height:12.4px;text-align:center;color:#5c5c5c;white-space:nowrap">0</div>
<div class="a" style="left:3.8px;width:120px;top:109.3px;font-size:9.15px;line-height:12.4px;text-align:center;color:#5c5c5c;white-space:nowrap">13272</div>
<div class="a" style="left:87.7px;top:109.3px;font-size:9.15px;line-height:12.4px;color:#5c5c5c;white-space:nowrap">Stats</div>
<div class="a" style="left:161.2px;top:109.3px;font-size:9.15px;line-height:12.4px;color:#5c5c5c;white-space:nowrap">Idle</div>
<div class="a" style="left:503.9px;width:120px;top:109.3px;font-size:9.15px;line-height:12.4px;text-align:center;color:#5c5c5c;white-space:nowrap">0</div>
<div class="a" style="left:551.4px;width:120px;top:109.3px;font-size:9.15px;line-height:12.4px;text-align:center;color:#5c5c5c;white-space:nowrap">0</div>
<div class="a" style="left:605.9px;width:120px;top:109.3px;font-size:9.15px;line-height:12.4px;text-align:center;color:#5c5c5c;white-space:nowrap">0</div>
<svg style="left:809.5px;top:106.8px" width="24.6" height="17.3" viewBox="0 0 24.6 17.3"><rect width="24.6" height="17.3" rx="2.2" fill="#5bc0de"/><circle cx="12.3" cy="8.65" r="4.4" fill="#fff"/><text x="12.3" y="11.3" font-size="7.2" font-weight="bold" text-anchor="middle" fill="#5bc0de" font-family="Liberation Sans">?</text></svg>
<svg style="left:836.7px;top:106.8px" width="24.6" height="17.3" viewBox="0 0 24.6 17.3"><rect width="24.6" height="17.3" rx="2.2" fill="#428bca"/><circle cx="12.3" cy="8.65" r="4.4" fill="#fff"/><rect x="9.6" y="7.9" width="5.4" height="1.5" fill="#428bca"/></svg>
<div class="a" style="left:-32.8px;width:120px;top:131.9px;font-size:9.15px;line-height:12.4px;text-align:center;color:#5c5c5c;white-space:nowrap">0</div>
<div class="a" style="left:3.8px;width:120px;top:131.9px;font-size:9.15px;line-height:12.4px;text-align:center;color:#5c5c5c;white-space:nowrap">12384</div>
<div class="a" style="left:87.7px;top:131.9px;font-size:9.15px;line-height:12.4px;color:#5c5c5c;white-space:nowrap">FacetModel</div>
<div class="a" style="left:161.2px;top:131.9px;font-size:9.15px;line-height:12.4px;color:#5c5c5c;white-space:nowrap">Idle</div>
<div class="a" style="left:503.9px;width:120px;top:131.9px;font-size:9.15px;line-height:12.4px;text-align:center;color:#5c5c5c;white-space:nowrap">0</div>
<div class="a" style="left:551.4px;width:120px;top:131.9px;font-size:9.15px;line-height:12.4px;text-align:center;color:#5c5c5c;white-space:nowrap">0</div>
<div class="a" style="left:605.9px;width:120px;top:131.9px;font-size:9.15px;line-height:12.4px;text-align:center;color:#5c5c5c;white-space:nowrap">0</div>
<svg style="left:809.5px;top:129.5px" width="24.6" height="17.3" viewBox="0 0 24.6 17.3"><rect width="24.6" height="17.3" rx="2.2" fill="#5bc0de"/><circle cx="12.3" cy="8.65" r="4.4" fill="#fff"/><text x="12.3" y="11.3" font-size="7.2" font-weight="bold" text-anchor="middle" fill="#5bc0de" font-family="Liberation Sans">?</text></svg>
<svg style="left:836.7px;top:129.5px" width="24.6" height="17.3" viewBox="0 0 24.6 17.3"><rect width="24.6" height="17.3" rx="2.2" fill="#428bca"/><circle cx="12.3" cy="8.65" r="4.4" fill="#fff"/><rect x="9.6" y="7.9" width="5.4" height="1.5" fill="#428bca"/></svg>
<div class="a" style="left:-32.8px;width:120px;top:167.2px;font-size:9.15px;line-height:12.4px;text-align:center;color:#5c5c5c;white-space:nowrap">49725</div>
<div class="a" style="left:3.8px;width:120px;top:167.2px;font-size:9.15px;line-height:12.4px;text-align:center;color:#5c5c5c;white-space:nowrap">14244</div>
<div class="a" style="left:87.7px;top:154.8px;font-size:9.15px;line-height:12.4px;color:#5c5c5c;white-space:nowrap">Planning</div>
<div class="a" style="left:87.7px;top:167.2px;font-size:9.15px;line-height:12.4px;color:#5c5c5c;white-space:nowrap">Analytics/Tim</div>
<div class="a" style="left:87.7px;top:179.6px;font-size:9.15px;line-height:12.4px;color:#5c5c5c;white-space:nowrap">Ryan</div>
<div class="a" style="left:161.2px;top:167.2px;font-size:9.15px;line-height:12.4px;color:#5c5c5c;white-space:nowrap">Run</div>
<div class="a" style="left:205.7px;top:161.0px;font-size:9.15px;line-height:12.4px;color:#5c5c5c;white-space:nowrap">POST</div>
<div class="a" style="left:205.7px;top:173.4px;font-size:9.15px;line-height:12.4px;color:#5c5c5c;white-space:nowrap">/api/v1/Chores('Cub.GeneralLedger.Demo')/tm1.Execute</div>
<div class="a" style="left:503.9px;width:120px;top:167.2px;font-size:9.15px;line-height:12.4px;text-align:center;color:#5c5c5c;white-space:nowrap">19</div>
<div class="a" style="left:551.4px;width:120px;top:167.2px;font-size:9.15px;line-height:12.4px;text-align:center;color:#5c5c5c;white-space:nowrap">0</div>
<div class="a" style="left:605.9px;width:120px;top:167.2px;font-size:9.15px;line-height:12.4px;text-align:center;color:#5c5c5c;white-space:nowrap">25</div>
<div class="a" style="left:700.0px;top:167.2px;font-size:9.15px;line-height:12.4px;color:#5c5c5c;white-space:nowrap">Arc</div>
<svg style="left:795.0px;top:164.8px" width="24.6" height="17.3" viewBox="0 0 24.6 17.3"><rect width="24.6" height="17.3" rx="2.2" fill="#5bc0de"/><circle cx="12.3" cy="8.65" r="4.4" fill="#fff"/><text x="12.3" y="11.3" font-size="7.2" font-weight="bold" text-anchor="middle" fill="#5bc0de" font-family="Liberation Sans">?</text></svg>
<svg style="left:822.9px;top:164.8px" width="24.6" height="17.3" viewBox="0 0 24.6 17.3"><rect width="24.6" height="17.3" rx="2.2" fill="#428bca"/><circle cx="12.3" cy="8.65" r="4.4" fill="#fff"/><rect x="9.6" y="7.9" width="5.4" height="1.5" fill="#428bca"/></svg>
<div class="a" style="left:-32.8px;width:120px;top:214.9px;font-size:9.15px;line-height:12.4px;text-align:center;color:#5c5c5c;white-space:nowrap">49725</div>
<div class="a" style="left:3.8px;width:120px;top:214.9px;font-size:9.15px;line-height:12.4px;text-align:center;color:#5c5c5c;white-space:nowrap">13384</div>
<div class="a" style="left:87.7px;top:202.5px;font-size:9.15px;line-height:12.4px;color:#5c5c5c;white-space:nowrap">Planning</div>
<div class="a" style="left:87.7px;top:214.9px;font-size:9.15px;line-height:12.4px;color:#5c5c5c;white-space:nowrap">Analytics/Tim</div>
<div class="a" style="left:87.7px;top:227.3px;font-size:9.15px;line-height:12.4px;color:#5c5c5c;white-space:nowrap">Ryan</div>
<div class="a" style="left:161.2px;top:214.9px;font-size:9.15px;line-height:12.4px;color:#5c5c5c;white-space:nowrap">Idle</div>
<div class="a" style="left:503.9px;width:120px;top:214.9px;font-size:9.15px;line-height:12.4px;text-align:center;color:#5c5c5c;white-space:nowrap">0</div>
<div class="a" style="left:551.4px;width:120px;top:214.9px;font-size:9.15px;line-height:12.4px;text-align:center;color:#5c5c5c;white-space:nowrap">0</div>
<div class="a" style="left:605.9px;width:120px;top:214.9px;font-size:9.15px;line-height:12.4px;text-align:center;color:#5c5c5c;white-space:nowrap">25</div>
<div class="a" style="left:700.0px;top:214.9px;font-size:9.15px;line-height:12.4px;color:#5c5c5c;white-space:nowrap">Arc</div>
<svg style="left:809.5px;top:212.5px" width="24.6" height="17.3" viewBox="0 0 24.6 17.3"><rect width="24.6" height="17.3" rx="2.2" fill="#5bc0de"/><circle cx="12.3" cy="8.65" r="4.4" fill="#fff"/><text x="12.3" y="11.3" font-size="7.2" font-weight="bold" text-anchor="middle" fill="#5bc0de" font-family="Liberation Sans">?</text></svg>
<svg style="left:836.7px;top:212.5px" width="24.6" height="17.3" viewBox="0 0 24.6 17.3"><rect width="24.6" height="17.3" rx="2.2" fill="#428bca"/><circle cx="12.3" cy="8.65" r="4.4" fill="#fff"/><rect x="9.6" y="7.9" width="5.4" height="1.5" fill="#428bca"/></svg>
</div>
<div class="a" style="left:1014px;top:263px;width:1px;height:237px;background:#e2e2e2"></div>
<!--/TABLE-->
<!--MAIN-->
</body></html>
